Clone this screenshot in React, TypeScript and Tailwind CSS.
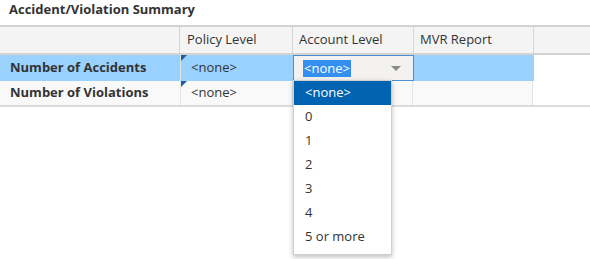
import * as React from "react";

const options = ["0", "1", "2", "3", "4", "5 or more"];

function Corner() {
  return (
    <span className="absolute left-0 top-0 h-0 w-0 border-t-[6px] border-r-[6px] border-t-[#1d5e9c] border-r-transparent" />
  );
}

export default function App() {
  return (
    <div className="relative h-[259px] w-[590px] overflow-hidden bg-white font-['Open_Sans',sans-serif] text-[13px] text-[#333]">
      <div className="h-[25px] pl-[9px] text-[13px] font-bold leading-[18px] text-[#333]">
        Accident/Violation Summary
      </div>

      <div className="w-full">
        {/* header */}
        <div className="flex h-[30px] border-y-2 border-[#d3d3d3] bg-[#f4f4f4]">
          <div className="w-[180px] border-r border-[#d6d6d6]" />
          <div className="flex w-[113px] items-center border-r border-[#d6d6d6] pl-[7px]">
            Policy Level
          </div>
          <div className="flex w-[121px] items-center border-r border-[#d6d6d6] pl-[6px]">
            Account Level
          </div>
          <div className="flex w-[120px] items-center border-r border-[#d6d6d6] pl-[6px]">
            MVR Report
          </div>
          <div className="flex-1" />
        </div>

        {/* row 1 */}
        <div className="flex h-[26px]">
          <div className="flex w-[180px] items-center bg-[#99d2ff] pl-[10px] font-bold">
            Number of Accidents
          </div>
          <div className="relative flex w-[113px] items-center border-l border-[#e3e3e3] bg-[#99d2ff] pl-[10px]">
            <Corner />
            &lt;none&gt;
          </div>
          <div className="relative flex w-[121px] items-center border border-[#4a90d6] bg-[#f3f2f1] pl-[9px]">
            <span className="bg-[#3390f0] px-[1px] leading-[17px] text-white">&lt;none&gt;</span>
            <span className="absolute right-[12px] top-[10px] h-0 w-0 border-x-[5px] border-t-[5px] border-x-transparent border-t-[#8a8a8a]" />
          </div>
          <div className="w-[120px] bg-[#99d2ff]" />
          <div className="flex-1" />
        </div>

        {/* row 2 */}
        <div className="flex h-[26px] border-b-2 border-[#dcdcdc]">
          <div className="flex w-[180px] items-center bg-[#f9f9f9] pl-[10px] font-bold">
            Number of Violations
          </div>
          <div className="relative flex w-[113px] items-center border-x border-[#e3e3e3] bg-[#f9f9f9] pl-[10px]">
            <Corner />
            &lt;none&gt;
          </div>
          <div className="w-[120px] border-r border-[#e3e3e3] bg-[#f9f9f9]" />
          <div className="w-[120px] border-r border-[#e3e3e3] bg-[#f9f9f9]" />
          <div className="flex-1" />
        </div>
      </div>

      {/* open dropdown */}
      <div className="absolute left-[293px] top-[80px] w-[99px] border border-[#d0d0d0] bg-white pb-[5px] shadow-[0_2px_5px_rgba(0,0,0,0.25)]">
        <div className="flex h-[24px] items-center bg-[#0063b1] pl-[11px] text-white">
          &lt;none&gt;
        </div>
        {options.map((o) => (
          <div key={o} className="flex h-[24px] items-center pl-[11px]">
            {o}
          </div>
        ))}
      </div>
    </div>
  );
}
